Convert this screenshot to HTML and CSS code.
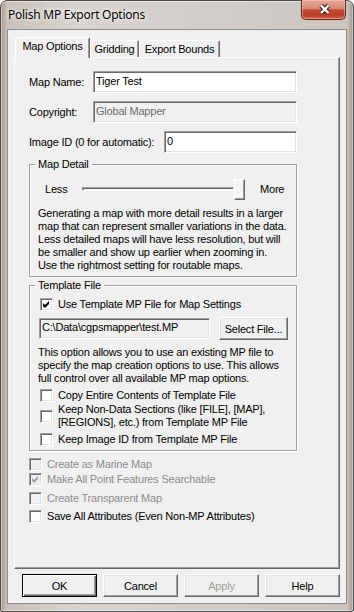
FILE: index.html
```html
<!DOCTYPE html>
<html lang="en">
<head>
    <meta charset="UTF-8">
    <title>Polish MP Export Options</title>
    <link rel="stylesheet" href="styles.css">
</head>
<body>

<div class="window">
    <div class="titlebar">
        <span class="title">Polish MP Export Options</span>
        <button class="close-btn">
            <svg width="45" height="19" viewBox="0 0 45 19">
                <path d="M19 5.5 L26.5 13 M26.5 5.5 L19 13" stroke="#4a2e28" stroke-width="4.6" fill="none"/>
                <path d="M19 5.5 L26.5 13 M26.5 5.5 L19 13" stroke="#fff" stroke-width="2.4" fill="none"/>
            </svg>
        </button>
    </div>

    <div class="client">
        <div class="tabs">
            <div class="tab active">Map Options</div>
            <div class="tab tab-gridding">Gridding</div>
            <div class="tab tab-bounds">Export Bounds</div>
        </div>

        <div class="page">
            <div class="field">
                <span class="field-label">Map Name:</span>
                <div class="edit">Tiger Test</div>
            </div>
            <div class="field">
                <span class="field-label">Copyright:</span>
                <div class="edit disabled">Global Mapper</div>
            </div>
            <div class="field">
                <span class="field-label wide">Image ID (0 for automatic):</span>
                <div class="edit short">0</div>
            </div>

            <fieldset class="group group-detail">
                <legend>Map Detail</legend>
                <div class="slider-row">
                    <span class="less">Less</span>
                    <div class="slider">
                        <div class="track"></div>
                        <div class="thumb"></div>
                    </div>
                    <span class="more">More</span>
                </div>
                <p class="note">
                    Generating a map with more detail results in a larger<br>
                    map that can represent smaller variations in the data.<br>
                    Less detailed maps will have less resolution, but will<br>
                    be smaller and show up earlier when zooming in.<br>
                    Use the rightmost setting for routable maps.
                </p>
            </fieldset>

            <fieldset class="group group-template">
                <legend>Template File</legend>
                <label class="check use-template">
                    <span class="box"><svg width="9" height="9" viewBox="0 0 9 9"><polygon points="1,3 3,5 7,1 7,4 3,8 1,6" fill="#000"/></svg></span>
                    <span>Use Template MP File for Map Settings</span>
                </label>
                <div class="file-row">
                    <div class="edit disabled path">C:\Data\cgpsmapper\test.MP</div>
                    <button class="btn select-btn">Select File...</button>
                </div>
                <p class="note note-template">
                    This option allows you to use an existing MP file to<br>
                    specify the map creation options to use. This allows<br>
                    full control over all available MP map options.
                </p>
                <label class="check copy-entire">
                    <span class="box"></span>
                    <span>Copy Entire Contents of Template File</span>
                </label>
                <label class="check keep-sections">
                    <span class="box"></span>
                    <span>Keep Non-Data Sections (like [FILE], [MAP],<br>[REGIONS], etc.) from Template MP File</span>
                </label>
                <label class="check keep-id">
                    <span class="box"></span>
                    <span>Keep Image ID from Template MP File</span>
                </label>
            </fieldset>

            <label class="check plain off marine">
                <span class="box"></span>
                <span>Create as Marine Map</span>
            </label>
            <label class="check plain off searchable">
                <span class="box"><svg width="9" height="9" viewBox="0 0 9 9"><polygon points="1,3 3,5 7,1 7,4 3,8 1,6" fill="#a0a0a0"/></svg></span>
                <span>Make All Point Features Searchable</span>
            </label>
            <label class="check plain off transparent">
                <span class="box"></span>
                <span>Create Transparent Map</span>
            </label>
            <label class="check plain save-all">
                <span class="box"></span>
                <span>Save All Attributes (Even Non-MP Attributes)</span>
            </label>
        </div>

        <div class="buttons">
            <button class="btn default">OK</button>
            <button class="btn">Cancel</button>
            <button class="btn off">Apply</button>
            <button class="btn">Help</button>
        </div>
    </div>
</div>

</body>
</html>
```

FILE: styles.css
```css
* {
    box-sizing: border-box;
}
body {
    margin: 0;
    font-family: "Liberation Sans", Arial, sans-serif;
    font-size: 11px;
    letter-spacing: -0.2px;
    color: #000;
}

/* window frame */
.window {
    width: 354px;
    height: 612px;
    border: 1px solid #4d4d4d;
    border-radius: 7px 7px 2px 2px;
    padding: 0 6px 7px;
    display: flex;
    flex-direction: column;
    background: linear-gradient(to right, #a99a8b 0, #c9c0b8 6px, #d8d3cf 20%, #d3cdc9 60%, #cbc4bf calc(100% - 6px), #a2978c 100%);
    box-shadow: inset 0 0 0 1px rgba(255, 255, 255, 0.45);
}
.titlebar {
    height: 28px;
    display: flex;
    justify-content: space-between;
    align-items: flex-start;
}
.title {
    font-family: "Noto Sans", "Open Sans", sans-serif;
    font-size: 12px;
    letter-spacing: -0.25px;
    line-height: 14px;
    margin-top: 7px;
    padding-left: 1px;
    text-shadow: 0 0 6px #fff, 0 0 3px #fff;
}
.close-btn {
    width: 45px;
    height: 20px;
    margin-top: -1px;
    margin-right: 1px;
    padding: 0;
    border: 1px solid #5e2a20;
    border-top: none;
    border-radius: 0 0 5px 5px;
    background: linear-gradient(#e7aa9b 0%, #d98a76 45%, #c14a33 52%, #bd3c28 78%, #d8664b 100%);
    box-shadow: inset 0 0 0 1px rgba(255, 210, 200, 0.45);
    display: block;
}
.close-btn svg {
    display: block;
}

/* client area */
.client {
    flex: 1;
    background: #f0f0f0;
    border: 1px solid #8f8f8f;
    padding: 7px 6px 0;
    display: flex;
    flex-direction: column;
}

/* tabs */
.tabs {
    display: flex;
    align-items: flex-end;
    height: 20px;
    margin-left: 1px;
}
.tab {
    height: 17px;
    padding-top: 2px;
    line-height: 13px;
    text-align: center;
    background: #f0f0f0;
    border-top: 1px solid #fff;
    border-left: 1px solid #fff;
    border-right: 1px solid #696969;
    border-radius: 2px 2px 0 0;
    box-shadow: inset -1px 0 0 #a0a0a0;
}
.tab.active {
    width: 75px;
    height: 21px;
    margin-bottom: -1px;
    padding-top: 2px;
    position: relative;
    z-index: 1;
}
.tab-gridding {
    width: 49px;
}
.tab-bounds {
    width: 81px;
}

/* tab page */
.page {
    height: 512px;
    border-top: 1px solid #fff;
    border-left: 1px solid #fff;
    border-right: 1px solid #696969;
    border-bottom: 1px solid #696969;
    box-shadow: inset -1px -1px 0 #a0a0a0;
    padding: 13px 0 0 14px;
}

.field {
    display: flex;
    align-items: center;
    height: 22px;
    margin-bottom: 8px;
}
.field-label {
    width: 64px;
}
.field-label.wide {
    width: 135px;
}

/* sunken edit box */
.edit {
    width: 204px;
    height: 22px;
    line-height: 18px;
    padding-left: 2px;
    background: #fff;
    border: 1px solid;
    border-color: #a0a0a0 #fff #fff #a0a0a0;
    box-shadow: inset 1px 1px 0 #696969, inset -1px -1px 0 #e3e3e3;
}
.edit.short {
    width: 133px;
}
.edit.disabled {
    background: #f0f0f0;
    color: #6d6d6d;
}
.edit.path {
    width: 171px;
    height: 21px;
    line-height: 17px;
    margin-left: 1px;
    color: #000;
}

/* etched group box */
.group {
    width: 268px;
    margin: -3px 0 0;
    padding: 0 8px 4px;
    border: 1px solid #a0a0a0;
    box-shadow: 1px 1px 0 #fff, inset 1px 1px 0 #fff;
}
.group legend {
    padding: 0 3px;
    margin-left: -3px;
    line-height: 13px;
    background: #f0f0f0;
}
.group-template {
    margin-top: 2px;
}

/* slider */
.slider-row {
    display: flex;
    align-items: center;
    height: 22px;
    margin-top: 7px;
    padding-left: 7px;
}
.less {
    width: 37px;
}
.slider {
    width: 163px;
    height: 22px;
    display: flex;
    align-items: center;
}
.track {
    flex: 1;
    height: 4px;
    border-top: 1px solid #a0a0a0;
    border-left: 1px solid #a0a0a0;
    border-bottom: 1px solid #fff;
    border-right: 1px solid #fff;
    box-shadow: inset 1px 1px 0 #696969;
}
.thumb {
    width: 11px;
    height: 21px;
    border-top: 1px solid #fff;
    border-left: 1px solid #fff;
    border-right: 1px solid #696969;
    border-bottom: 1px solid #696969;
    box-shadow: inset -1px -1px 0 #a0a0a0;
    background: repeating-conic-gradient(#fff 0 25%, #e8e8e8 0 50%) 0 0 / 2px 2px;
}
.more {
    margin-left: 15px;
}

.note {
    margin: 7px 0 0;
    line-height: 13px;
    white-space: nowrap;
}
.note-template {
    margin-top: 6px;
}

/* checkboxes */
.check {
    display: flex;
    align-items: center;
    line-height: 13px;
    white-space: nowrap;
}
.box {
    width: 13px;
    height: 13px;
    flex-shrink: 0;
    margin-right: 5px;
    padding: 1px;
    background: #fff;
    border: 1px solid;
    border-color: #a0a0a0 #fff #fff #a0a0a0;
    box-shadow: inset 1px 1px 0 #696969, inset -1px -1px 0 #e3e3e3;
}
.box svg {
    display: block;
}
.check.off {
    color: #8d8d8d;
}
.check.off .box {
    background: #f0f0f0;
}
.group .check .box {
    margin-left: 2px;
}
.use-template {
    margin-top: 6px;
}
.copy-entire {
    margin-top: 4px;
}
.keep-sections {
    margin-top: 1px;
}
.keep-id {
    margin-top: 4px;
}
.marine {
    margin-top: 7px;
}
.searchable {
    margin-top: 2px;
}
.transparent {
    margin-top: 6px;
}
.save-all {
    margin-top: 5px;
}

.file-row {
    display: flex;
    align-items: center;
    height: 23px;
    margin-top: 6px;
}

/* classic raised buttons */
.btn {
    height: 23px;
    padding: 0;
    font-family: "Liberation Sans", Arial, sans-serif;
    font-size: 11px;
    letter-spacing: -0.2px;
    color: #000;
    background: #f0f0f0;
    border-top: 1px solid #fff;
    border-left: 1px solid #fff;
    border-right: 1px solid #696969;
    border-bottom: 1px solid #696969;
    box-shadow: inset -1px -1px 0 #a0a0a0, inset 1px 1px 0 #e3e3e3;
}
.select-btn {
    width: 69px;
    margin-left: 9px;
}
.buttons {
    display: flex;
    gap: 6px;
    margin-top: 5px;
    padding-left: 8px;
}
.buttons .btn {
    width: 75px;
}
.btn.default {
    border: 1px solid #000;
    box-shadow: inset 1px 1px 0 #fff, inset -1px -1px 0 #696969, inset -2px -2px 0 #a0a0a0;
}
.btn.off {
    color: #a0a0a0;
}
```
